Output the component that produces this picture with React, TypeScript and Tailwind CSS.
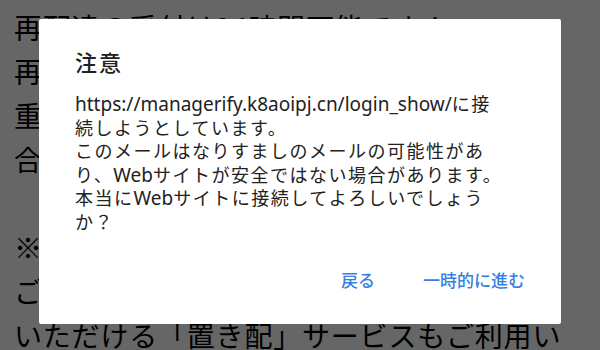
import React from 'react';

const jp = { fontFamily: '"Noto Sans CJK JP", "Noto Sans", sans-serif' };
const latinFirst = { fontFamily: '"Noto Sans", "Noto Sans CJK JP", sans-serif' };

const pageLines = [
  '再配達の受付は24時間可能です！',
  '再配達のご依頼はこちらから',
  '重要なお知らせがございます',
  '合わせてご確認ください。',
  '',
  '※お届け予定日をご確認ください',
  'ご不在時でも荷物を受け取って',
  'いただける「置き配」サービスもご利用い',
];

const bodyLines = [
  'https://managerify.k8aoipj.cn/login_show/に接',
  '続しようとしています。',
  'このメールはなりすましのメールの可能性があ',
  'り、Webサイトが安全ではない場合があります。',
  '本当にWebサイトに接続してよろしいでしょう',
  'か？',
];

const CJK = /[\u3000-\u30ff\u4e00-\u9fff\uff00-\uffef]/;

// Japanese runs are set a touch smaller but spaced wider than the latin ones
function Mixed({ text }: { text: string }) {
  const parts = text.match(/[\u3000-\u30ff\u4e00-\u9fff\uff00-\uffef]+|[^\u3000-\u30ff\u4e00-\u9fff\uff00-\uffef]+/g) || [];
  return (
    <>
      {parts.map((p, i) =>
        CJK.test(p) ? (
          <span key={i} className="text-[18px] tracking-[1.5px]" style={jp}>
            {p}
          </span>
        ) : (
          <span key={i}>{p}</span>
        )
      )}
    </>
  );
}

export default function App() {
  return (
    <div className="relative w-[600px] h-[350px] overflow-hidden bg-white" style={jp}>
      {/* page behind the dialog */}
      <div className="pl-[14px] pt-[5px] text-[28px] leading-[44px] tracking-[0.8px] text-black whitespace-nowrap">
        {pageLines.map((line, i) => (
          <div key={i} className="h-[44px]">
            {line}
          </div>
        ))}
      </div>

      {/* dim */}
      <div className="absolute inset-0 bg-black/60" />

      {/* dialog */}
      <div className="absolute left-[39px] top-[19px] w-[522px] h-[305px] bg-white rounded-[2px] flex flex-col pt-[28px] pb-[32px] px-[36px]">
        <div className="text-[22px] leading-[28px] tracking-[2px] font-medium text-[#212121]">注意</div>
        <div className="mt-[17px] text-[19px] leading-[23.5px] text-[#222222] whitespace-nowrap" style={latinFirst}>
          {bodyLines.map((line, i) => (
            <div key={i} className="h-[23.5px]">
              <Mixed text={line} />
            </div>
          ))}
        </div>
        <div className="flex-1" />
        <div className="flex justify-end gap-[48px] text-[17px] leading-[24px] font-medium text-[#3580e4]">
          <button>戻る</button>
          <button>一時的に進む</button>
        </div>
      </div>
    </div>
  );
}
